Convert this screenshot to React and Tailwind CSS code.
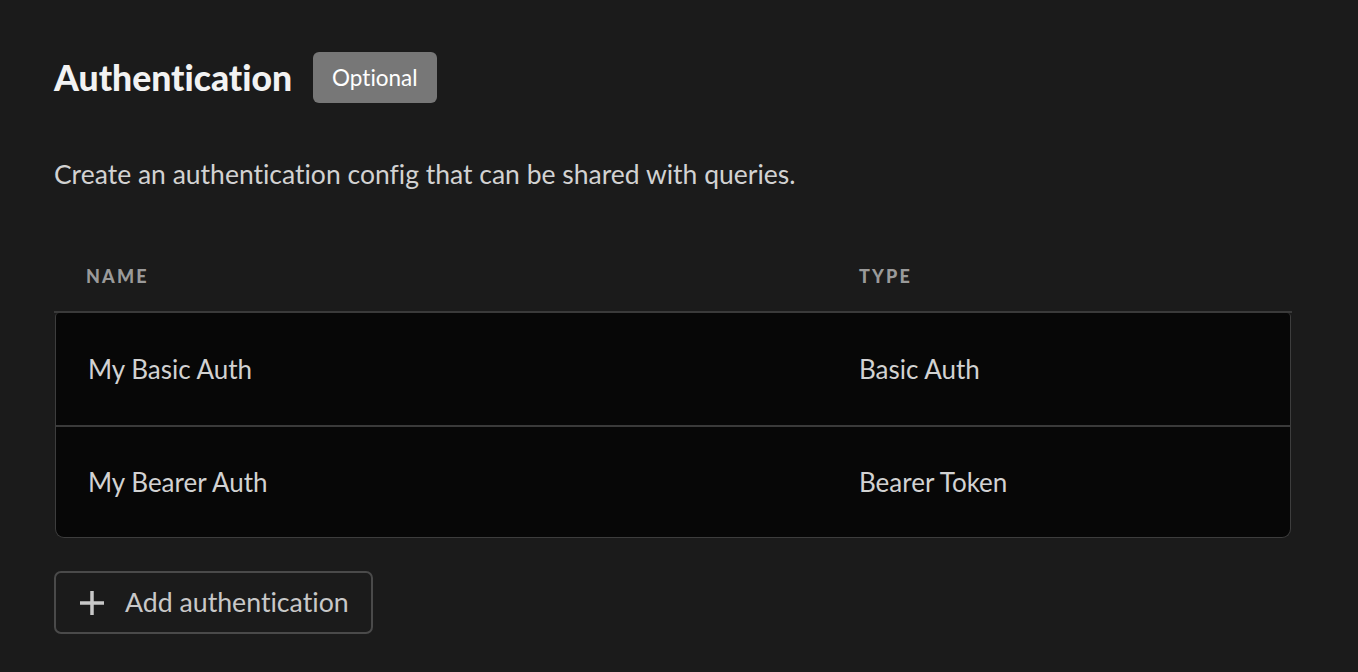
import React from "react";

const rows = [
  { name: "My Basic Auth", type: "Basic Auth" },
  { name: "My Bearer Auth", type: "Bearer Token" },
];

export default function App() {
  return (
    <div
      className="min-h-[672px] w-full bg-[#1b1b1b] pl-[54px] pr-[66px] pt-[52px] [font-variant-ligatures:none]"
      style={{ fontFamily: "Lato, 'Noto Sans', sans-serif" }}
    >
      <div className="flex items-center gap-[21px]">
        <h1 className="text-[35.5px] font-black leading-none text-[#f2f2f2]">Authentication</h1>
        <span className="flex h-[51px] items-center rounded-[6px] bg-[#777777] px-[19px] text-[22.5px] text-white">
          Optional
        </span>
      </div>
      <p className="mt-[54px] text-[26.5px] leading-[34px] text-[#d2d2d2]">
        Create an authentication config that can be shared with queries.
      </p>
      <div className="mt-[72px]">
        <div className="grid grid-cols-[773px_1fr] border-b-2 border-[#3a3a3a] px-[32px] pb-[21px] text-[18px] font-black tracking-[0.12em] text-[#9a9a9a]">
          <div>NAME</div>
          <div>TYPE</div>
        </div>
        <div className="ml-px mr-px overflow-hidden rounded-b-[9px] rounded-t-[4px] border border-t-0 border-[#3d3d3d] bg-[#070707]">
          {rows.map((r, i) => (
            <div
              key={r.name}
              className={`grid h-[112px] grid-cols-[771px_1fr] items-center px-[32px] text-[26px] text-[#d2d2d2] ${
                i > 0 ? "border-t-2 border-[#3a3a3a]" : ""
              }`}
            >
              <div>{r.name}</div>
              <div>{r.type}</div>
            </div>
          ))}
        </div>
      </div>
      <button className="mt-[33px] flex h-[63px] items-center gap-[21px] rounded-[7px] border-2 border-[#4a4a4a] pl-[24px] pr-[22px] text-[26.7px] text-[#c8c8c8]">
        <svg width="24" height="24" viewBox="0 0 24 24" fill="none" stroke="#c8c8c8" strokeWidth="3.5">
          <path d="M12 0v24M0 12h24" />
        </svg>
        <span>Add authentication</span>
      </button>
    </div>
  );
}
